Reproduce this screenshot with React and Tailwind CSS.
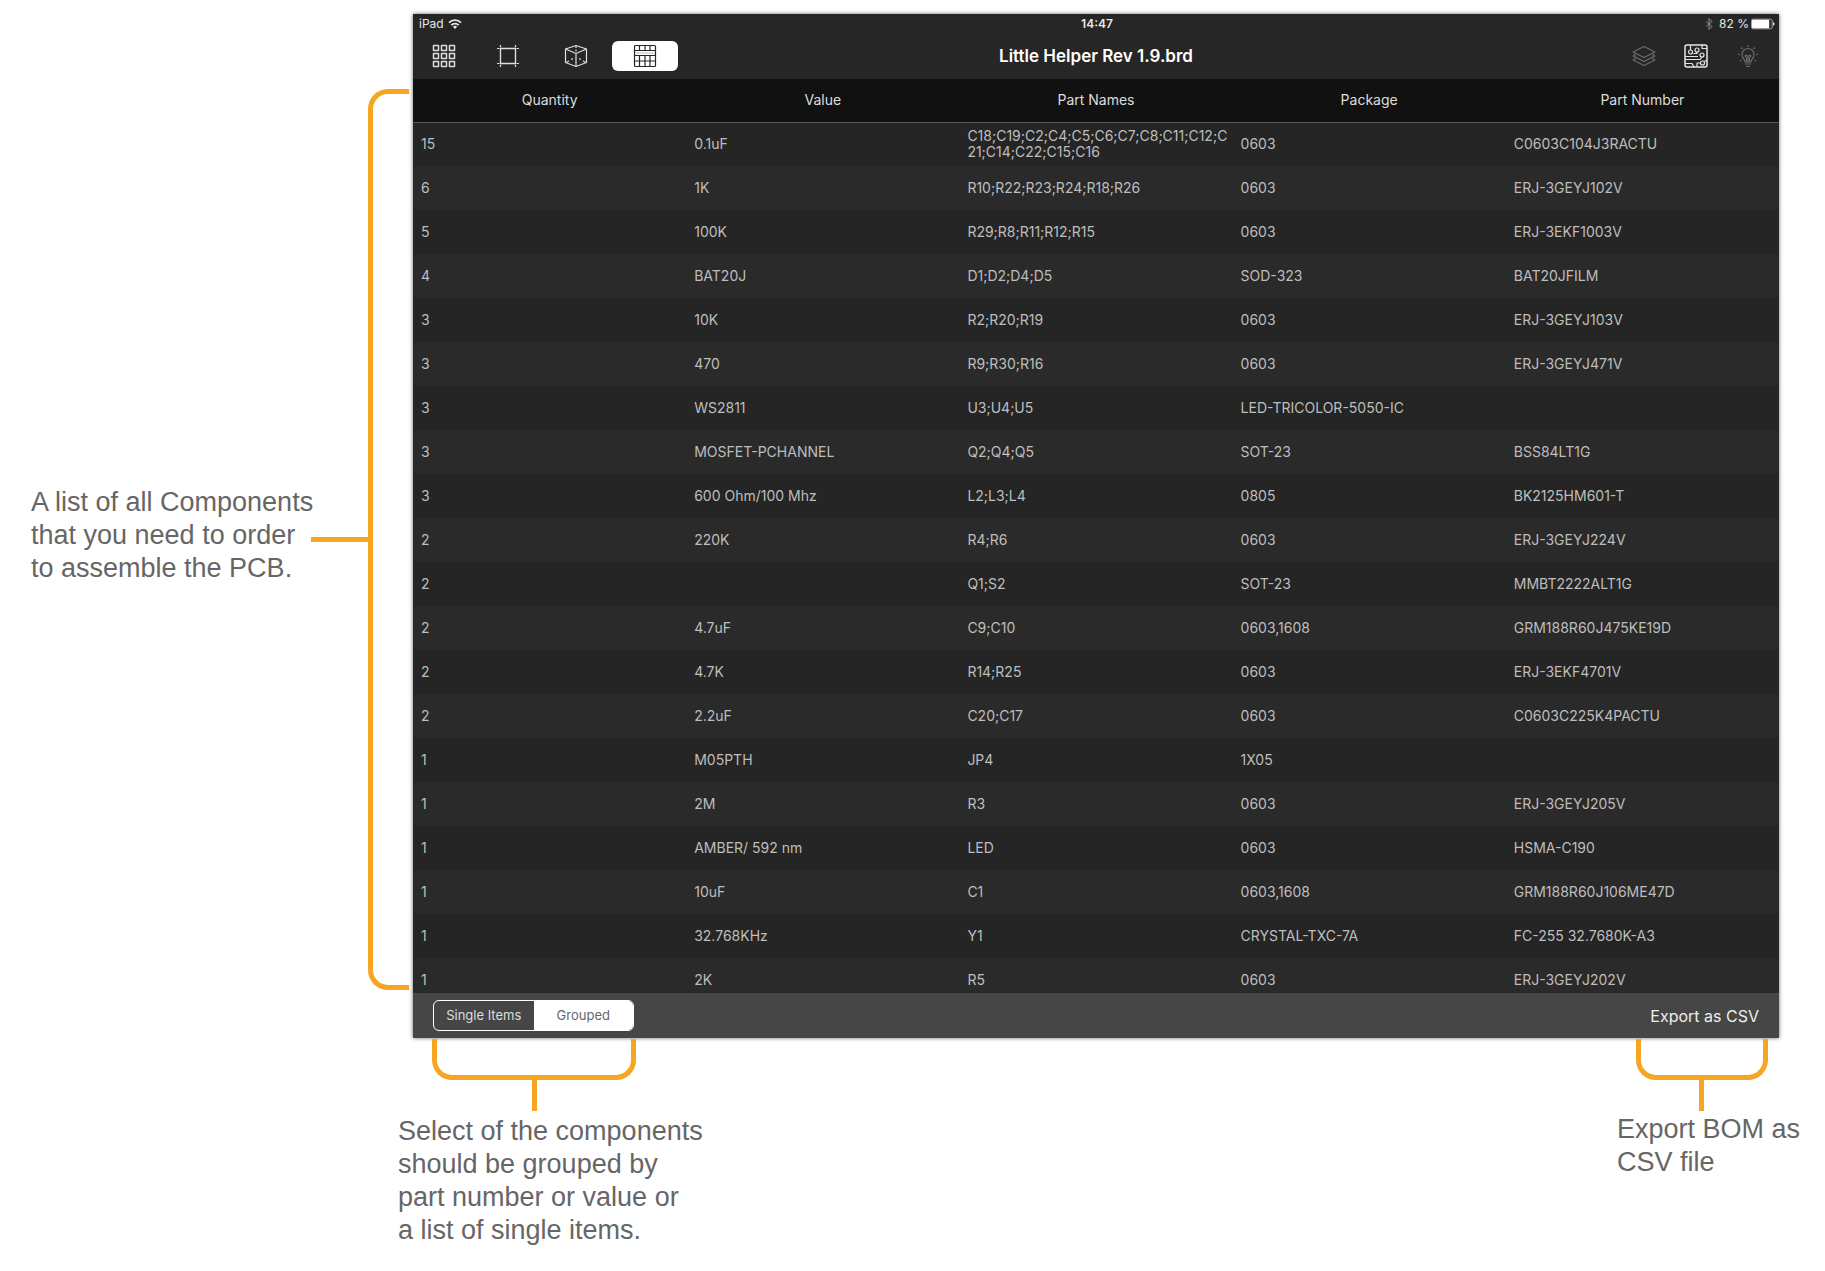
import { useState } from "react";
import { clsx } from "clsx";

const columns = ["Quantity", "Value", "Part Names", "Package", "Part Number"];

const parts = [
  ["15", "0.1uF", "C18;C19;C2;C4;C5;C6;C7;C8;C11;C12;C21;C14;C22;C15;C16", "0603", "C0603C104J3RACTU"],
  ["6", "1K", "R10;R22;R23;R24;R18;R26", "0603", "ERJ-3GEYJ102V"],
  ["5", "100K", "R29;R8;R11;R12;R15", "0603", "ERJ-3EKF1003V"],
  ["4", "BAT20J", "D1;D2;D4;D5", "SOD-323", "BAT20JFILM"],
  ["3", "10K", "R2;R20;R19", "0603", "ERJ-3GEYJ103V"],
  ["3", "470", "R9;R30;R16", "0603", "ERJ-3GEYJ471V"],
  ["3", "WS2811", "U3;U4;U5", "LED-TRICOLOR-5050-IC", ""],
  ["3", "MOSFET-PCHANNEL", "Q2;Q4;Q5", "SOT-23", "BSS84LT1G"],
  ["3", "600 Ohm/100 Mhz", "L2;L3;L4", "0805", "BK2125HM601-T"],
  ["2", "220K", "R4;R6", "0603", "ERJ-3GEYJ224V"],
  ["2", "", "Q1;S2", "SOT-23", "MMBT2222ALT1G"],
  ["2", "4.7uF", "C9;C10", "0603,1608", "GRM188R60J475KE19D"],
  ["2", "4.7K", "R14;R25", "0603", "ERJ-3EKF4701V"],
  ["2", "2.2uF", "C20;C17", "0603", "C0603C225K4PACTU"],
  ["1", "M05PTH", "JP4", "1X05", ""],
  ["1", "2M", "R3", "0603", "ERJ-3GEYJ205V"],
  ["1", "AMBER/ 592 nm", "LED", "0603", "HSMA-C190"],
  ["1", "10uF", "C1", "0603,1608", "GRM188R60J106ME47D"],
  ["1", "32.768KHz", "Y1", "CRYSTAL-TXC-7A", "FC-255 32.7680K-A3"],
  ["1", "2K", "R5", "0603", "ERJ-3GEYJ202V"],
];

const Icon = ({ children, className = "" }) => (
  <svg
    viewBox="0 0 24 24"
    fill="none"
    stroke="currentColor"
    strokeWidth="1.2"
    strokeLinejoin="round"
    className={clsx("size-6", className)}
    aria-hidden="true"
  >
    {children}
  </svg>
);

const GridIcon = () => (
  <Icon>
    {[1.5, 9.5, 17.5].map((y) =>
      [1.5, 9.5, 17.5].map((x) => (
        <rect key={`${x}-${y}`} x={x} y={y} width="5" height="5" strokeWidth="1.5" />
      ))
    )}
  </Icon>
);

const FrameIcon = () => (
  <Icon>
    <path d="M4.5 4.5h15v15h-15z" strokeWidth="1.4" />
    <path d="M4.5 1v2.500M19.500 1v2.500M4.5 20.500V23M19.500 20.500V23M1 4.500h2.500M1 19.500h2.500M20.500 4.500H23M20.500 19.500H23" />
  </Icon>
);

const CubeIcon = () => (
  <Icon>
    <path d="M12 1.500 22.500 5v13.500L12 22.500 1.500 18.500V5z" />
    <path d="M1.500 5 12 9.500 22.500 5M12 9.500v13" />
    <path d="M12 2v2M12 5.500v2M2 18.500l3-1.500M7 15.500l2-1M22 18.500 19 17M17 15.500l-2-1" />
  </Icon>
);

const TableIcon = () => (
  <Icon>
    <rect x="1.500" y="1.500" width="21" height="21" rx="1" />
    <path d="M1.500 6.500h21M1.500 11.500h21M1.500 17h21M6.500 1.500v5M12 1.500v5M17 1.500v5M6.500 11.500v11M12 11.500v11M17 11.500v11" />
    <path d="M2 9h20" stroke="#c8c8c8" />
  </Icon>
);

const LayersIcon = () => (
  <Icon>
    <path d="M12 2.500 23 8l-11 5.500L1 8z" />
    <path d="M4 10 1 12l11 5.500L23 12l-3-2" />
    <path d="M4 14l-3 2 11 5.500L23 16l-3-2" />
  </Icon>
);

const BoardIcon = () => (
  <Icon>
    <rect x="1" y="1" width="22" height="22" rx="2" strokeWidth="1.5" />
    <circle cx="6.500" cy="8" r="2" />
    <circle cx="13" cy="6" r="2" />
    <circle cx="18" cy="11" r="2" />
    <circle cx="18.500" cy="19" r="2" />
    <path d="M6.500 1v5M13 8v1.500h-3.500M18 1v3.500h5M18 13l-2 2.500H1M1 12.500h13M1 19.500h7l2 3.500M13 23v-4h3.500M20.500 17.500 23 16" />
  </Icon>
);

const BulbIcon = () => (
  <Icon>
    <path d="M9 18c0-3-3-3.500-3-7.500a6 6 0 0 1 12 0c0 4-3 4.500-3 7.500z" />
    <path d="M9 20h6M10 22.500h4M12 18v-5M10.500 18v-4l-1.500-2 1.500-1 1.500 2 1.500-2 1.500 1-1.500 2v4" />
    <path d="M12 1v2M5 3.500l1.500 1.500M19 3.500 17.500 5M2 10.500h2M20 10.500h2M4 17l1.500-1M20 17l-1.500-1" />
  </Icon>
);

const StatusBar = () => (
  <div className="grid grid-cols-3 items-center h-5 pl-1.5 pr-1 text-xs text-gray-200">
    <div className="flex items-center gap-1">
      <span>iPad</span>
      <svg viewBox="0 0 14 11" className="w-3.5 h-3" fill="none" stroke="currentColor" strokeWidth="1.8" aria-hidden="true">
        <path d="M1 4.200a8.500 8.500 0 0 1 12 0M3.300 6.700a5.200 5.200 0 0 1 7.400 0" />
        <path d="M4.900 8.300a3 3 0 0 1 4.200 0L7 10.500z" fill="currentColor" stroke="none" />
      </svg>
    </div>
    <div className="text-center font-semibold">14:47</div>
    <div className="flex items-center justify-end gap-0.5">
      <svg viewBox="0 0 8 12" className="w-2 h-3 mr-1 text-[#8a8a8a]" fill="none" stroke="currentColor" aria-hidden="true">
        <path d="M1 3.500 7 8.500 4 11.500V.5l3 3-6 5" />
      </svg>
      <span>82 %</span>
      <svg viewBox="0 0 25 11" className="w-6 h-3" fill="currentColor" aria-hidden="true">
        <rect x="0.500" y="0.500" width="21.500" height="10" rx="1.500" fill="none" stroke="#aaaaaa" />
        <rect x="1" y="1" width="18" height="9" rx="1" fill="#ffffff" />
        <path d="M23 3.500c2 .5 2 3.500 0 4z" />
      </svg>
    </div>
  </div>
);

const Toolbar = () => (
  <div className="grid grid-cols-3 items-center h-[45px]">
    <div className="flex items-center pl-[19px] pb-0.5 text-[#dddddd]">
      <button type="button" aria-label="Projects"><GridIcon /></button>
      <button type="button" aria-label="Board" className="ml-10"><FrameIcon /></button>
      <button type="button" aria-label="3D view" className="ml-11"><CubeIcon /></button>
      <button
        type="button"
        aria-label="Bill of materials"
        className="flex items-center justify-center w-[66px] h-[30px] ml-6 rounded-md bg-white text-[#262626]"
      >
        <TableIcon />
      </button>
    </div>
    <h1 className="text-center text-[17px] font-semibold text-white">Little Helper Rev 1.9.brd</h1>
    <div className="flex items-center justify-end gap-7 pr-[19px] pb-0.5 text-[#6c6c6c]">
      <button type="button" aria-label="Layers"><LayersIcon /></button>
      <button type="button" aria-label="Parts" className="text-[#e5e5e5]"><BoardIcon /></button>
      <button type="button" aria-label="Highlight"><BulbIcon /></button>
    </div>
  </div>
);

const PartsTable = () => (
  <div className="h-[914px] overflow-hidden">
    <table className="w-full table-fixed border-collapse text-[#bebebe]">
      <thead>
        <tr className="h-[43px] bg-[#111111] border-b border-[#555555] text-sm text-[#dddddd]">
          {columns.map((name) => (
            <th key={name} scope="col" className="p-0 font-normal">{name}</th>
          ))}
        </tr>
      </thead>
      <tbody>
        {parts.map((row, index) => (
          <tr key={index} className="h-11 odd:bg-[#252525] even:bg-[#2a2a2a] text-sm leading-4">
            {row.map((cell, i) => (
              <td key={columns[i]} className="pl-2 pr-1 py-0 break-all leading-4">{cell}</td>
            ))}
          </tr>
        ))}
      </tbody>
    </table>
  </div>
);

const Footer = () => {
  const [mode, setMode] = useState("Grouped");

  return (
    <div className="flex items-center justify-between h-[45px] px-5 bg-[#464646]">
      <div className="flex w-[201px] h-[31px] rounded-md border border-white overflow-hidden text-[13px]">
        {["Single Items", "Grouped"].map((name) => (
          <button
            key={name}
            type="button"
            aria-pressed={mode === name}
            onClick={() => setMode(name)}
            className={clsx("flex-1", mode === name ? "bg-white text-[#666666]" : "text-[#dddddd]")}
          >
            {name}
          </button>
        ))}
      </div>
      <button type="button" className="text-base text-[#eeeeee]">Export as CSV</button>
    </div>
  );
};

// Bracket that hangs below a control, with a stem down to its caption
const BottomBracket = ({ className }) => (
  <div className={clsx("flex flex-col items-center", className)}>
    <div className="w-full h-[41px] rounded-b-[20px] border-5 border-t-0 border-[#f6a623]" />
    <div className="w-[5px] h-[31px] bg-[#f6a623]" />
  </div>
);

const App = () => (
  <div className="min-h-screen bg-white pt-3.5 font-['Liberation_Sans',sans-serif] text-[27px] leading-[33px] text-[#666666]">
    <div className="flex">
      <aside className="flex items-center w-[413px] shrink-0 pl-[31px] pt-[75px] pb-12">
        <p className="w-[280px] shrink-0 pb-2 whitespace-nowrap">
          A list of all Components
          <br />
          that you need to order
          <br />
          to assemble the PCB.
        </p>
        <div className="w-[57px] h-[5px] bg-[#f6a623]" />
        <div className="self-stretch w-[41px] rounded-l-[20px] border-5 border-r-0 border-[#f6a623]" />
      </aside>
      <main className="flex-1 mr-[46px] bg-[#262626] font-[Inter,sans-serif] leading-normal shadow-[0_0_4px_rgba(0,0,0,0.6)]">
        <StatusBar />
        <Toolbar />
        <PartsTable />
        <Footer />
      </main>
    </div>
    <div className="flex justify-between pl-[398px] pr-[25px] pt-px">
      <div>
        <BottomBracket className="w-[204px] ml-[34px]" />
        <p className="mt-1">
          Select of the components
          <br />
          should be grouped by
          <br />
          part number or value or
          <br />a list of single items.
        </p>
      </div>
      <div>
        <BottomBracket className="w-[132px] ml-[19px]" />
        <p className="mt-0.5">
          Export BOM as
          <br />
          CSV file
        </p>
      </div>
    </div>
  </div>
);

export default App;
